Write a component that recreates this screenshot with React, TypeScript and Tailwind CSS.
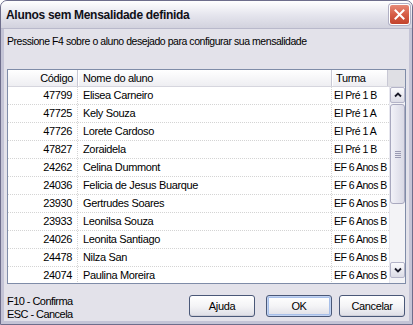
const ROWS = [
  { code: '47799', name: 'Elisea Carneiro', turma: 'EI Pré 1 B' },
  { code: '47725', name: 'Kely Souza', turma: 'EI Pré 1 A' },
  { code: '47726', name: 'Lorete Cardoso', turma: 'EI Pré 1 A' },
  { code: '47827', name: 'Zoraidela', turma: 'EI Pré 1 B' },
  { code: '24262', name: 'Celina Dummont', turma: 'EF 6 Anos B' },
  { code: '24036', name: 'Felicia de Jesus Buarque', turma: 'EF 6 Anos B' },
  { code: '23930', name: 'Gertrudes Soares', turma: 'EF 6 Anos B' },
  { code: '23933', name: 'Leonilsa Souza', turma: 'EF 6 Anos B' },
  { code: '24026', name: 'Leonita Santiago', turma: 'EF 6 Anos B' },
  { code: '24478', name: 'Nilza San', turma: 'EF 6 Anos B' },
  { code: '24074', name: 'Paulina Moreira', turma: 'EF 6 Anos B' },
];

export default function App() {
  return (
    <div className="w-[413px] h-[325px] flex flex-col rounded-t-[7px] border border-[#6e6e8c] bg-[#c4c4d6] overflow-hidden font-['Liberation_Sans',Arial,sans-serif] text-[11px] tracking-[-0.35px] text-black">
      <TitleBar />
      <div className="flex-1 mx-[3px] mb-[3px] bg-[#e3e2ea] flex flex-col px-[3px]">
        <p className="pt-[6px] leading-[12px] text-[10.5px] tracking-[-0.45px] whitespace-nowrap">
          Pressione F4 sobre o aluno desejado para configurar sua mensalidade
        </p>
        <StudentList />
        <div className="flex items-start pt-[11px]">
          <div className="leading-[13px] tracking-[-0.55px] whitespace-nowrap">
            <div>F10 - Confirma</div>
            <div>ESC - Cancela</div>
          </div>
          <div className="ml-auto flex items-center mr-[1px]">
            <XpButton label="Ajuda" />
            <XpButton label="OK" focused className="ml-[11px]" />
            <XpButton label="Cancelar" className="ml-[7px]" />
          </div>
        </div>
      </div>
    </div>
  );
}

function TitleBar() {
  return (
    <div className="h-[28px] flex items-center pl-[5px] pr-[2px] bg-gradient-to-b from-[#ffffff] via-[#e6e6ee] to-[#d2d2de] border-b border-[#b9b9cb]">
      <span className="text-[12px] font-bold tracking-[-0.3px] text-[#101018] whitespace-nowrap">
        Alunos sem Mensalidade definida
      </span>
      <button
        type="button"
        className="ml-auto w-[21px] h-[21px] rounded-[3px] border border-white bg-gradient-to-b from-[#e68a77] via-[#d65c45] to-[#c2432c] flex items-center justify-center shadow-[0_0_0_1px_#b0b0c4]"
      >
        <svg width="11" height="11" viewBox="0 0 11 11">
          <path d="M1.5 1.5 L9.5 9.5 M9.5 1.5 L1.5 9.5" stroke="#fff" strokeWidth="2" strokeLinecap="square" />
        </svg>
      </button>
    </div>
  );
}

function StudentList() {
  return (
    <div className="mt-[22px] h-[215px] border border-[#7f8ca8] bg-white flex flex-col overflow-hidden">
      {/* header */}
      <div className="h-[17px] flex shrink-0 bg-gradient-to-b from-[#ffffff] to-[#eeeef2] border-b border-[#d6d6de]">
        <HeaderCell className="w-[70px] justify-end pr-[4px]">Código</HeaderCell>
        <HeaderCell className="w-[254px] pl-[5px]">Nome do aluno</HeaderCell>
        <HeaderCell className="w-[56px] pl-[4px]">Turma</HeaderCell>
        <div className="flex-1 bg-[#dfdfe4]" />
      </div>
      <div className="flex-1 flex min-h-0">
        <div className="flex-1 overflow-hidden">
          {ROWS.map((r) => (
            <div key={r.code} className="h-[18px] flex items-center border-b border-dotted border-[#d4d4d4] whitespace-nowrap">
              <div className="w-[70px] shrink-0 h-full flex items-center justify-end pr-[5px] border-r border-dotted border-[#d4d4d4]">
                {r.code}
              </div>
              <div className="w-[254px] shrink-0 h-full flex items-center pl-[5px] border-r border-dotted border-[#d4d4d4]">
                {r.name}
              </div>
              <div className="flex-1 min-w-0 h-full flex items-center pl-[2px] text-[10.5px] tracking-[-0.5px] overflow-hidden">
                {r.turma}
              </div>
            </div>
          ))}
        </div>
        <ScrollBar />
      </div>
    </div>
  );
}

function HeaderCell({ children, className = '' }: { children: React.ReactNode; className?: string }) {
  return (
    <div className={`h-full shrink-0 flex items-center border-r border-[#c8c8d4] shadow-[1px_0_0_#ffffff] whitespace-nowrap ${className}`}>
      {children}
    </div>
  );
}

function ScrollBar() {
  return (
    <div className="w-[16px] shrink-0 flex flex-col bg-[#f3f3f6] border-l border-[#e6e6ee] pb-[5px]">
      <ArrowButton dir="up" />
      <div className="mt-[1px] h-[100px] rounded-[3px] border border-[#a9a9bf] bg-gradient-to-r from-[#f2f2f8] to-[#d9d9e5] flex flex-col items-center justify-center gap-[1px]">
        <div className="w-[6px] h-[1px] bg-[#9a9ab2]" />
        <div className="w-[6px] h-[1px] bg-[#9a9ab2]" />
        <div className="w-[6px] h-[1px] bg-[#9a9ab2]" />
        <div className="w-[6px] h-[1px] bg-[#9a9ab2]" />
      </div>
      <div className="flex-1" />
      <ArrowButton dir="down" />
    </div>
  );
}

function ArrowButton({ dir }: { dir: 'up' | 'down' }) {
  return (
    <div className="h-[16px] rounded-[2px] border border-[#b4b4c8] bg-gradient-to-b from-[#fbfbfd] to-[#dcdce6] flex items-center justify-center">
      <svg width="8" height="6" viewBox="0 0 8 6">
        <path
          d={dir === 'up' ? 'M1 4.5 L4 1.5 L7 4.5' : 'M1 1.5 L4 4.5 L7 1.5'}
          fill="none"
          stroke="#1a1a28"
          strokeWidth="1.8"
        />
      </svg>
    </div>
  );
}

function XpButton({ label, focused = false, className = '' }: { label: string; focused?: boolean; className?: string }) {
  return (
    <button
      type="button"
      className={`w-[66px] h-[22px] rounded-[3px] border border-[#4a5878] bg-gradient-to-b from-[#ffffff] via-[#f4f4f6] to-[#dedee6] text-[11px] tracking-[-0.35px] ${
        focused ? 'shadow-[inset_0_0_0_1px_#c2d3f2,inset_0_0_0_2px_#a7bfe9]' : 'shadow-[inset_0_-1px_0_#cfcfd8]'
      } ${className}`}
    >
      {label}
    </button>
  );
}
